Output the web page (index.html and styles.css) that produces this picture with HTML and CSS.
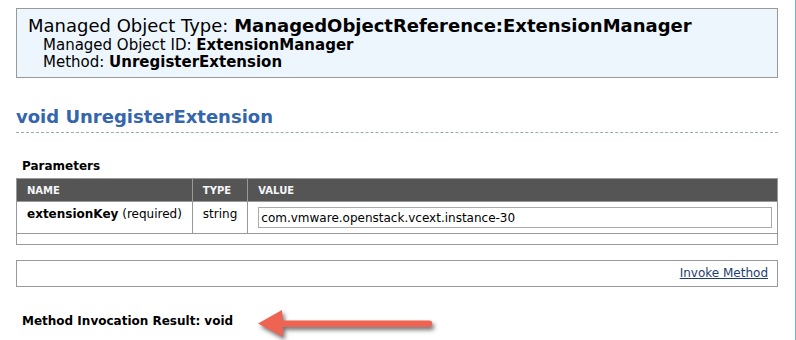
FILE: index.html
```html
<!DOCTYPE html>
<html lang="en">
<head>
    <meta charset="UTF-8">
    <title>UnregisterExtension</title>
    <link rel="stylesheet" href="styles.css">
</head>
<body>
    <div class="page">
        <div class="objbox">
            <div class="objtype">Managed Object Type: <b>ManagedObjectReference:ExtensionManager</b></div>
            <div class="objsub">Managed Object ID: <b>ExtensionManager</b></div>
            <div class="objsub">Method: <b>UnregisterExtension</b></div>
        </div>

        <h2 class="method-title">void UnregisterExtension</h2>

        <h3 class="section">Parameters</h3>
        <table class="params">
            <thead>
                <tr>
                    <th class="col-name">NAME</th>
                    <th class="col-type">TYPE</th>
                    <th>VALUE</th>
                </tr>
            </thead>
            <tbody>
                <tr>
                    <td class="label"><b>extensionKey</b> (required)</td>
                    <td class="label">string</td>
                    <td class="value"><input type="text" value="com.vmware.openstack.vcext.instance-30"></td>
                </tr>
                <tr class="spacer">
                    <td colspan="3"></td>
                </tr>
            </tbody>
        </table>

        <div class="invoke">
            <a href="#">Invoke Method</a>
        </div>

        <div class="result">
            <span class="result-text">Method Invocation Result: void</span>
            <svg class="arrow" width="200" height="46" viewBox="0 0 200 46">
                <path d="M8 21.5 L32 8 L33 18.5 L179 18.5 A3.25 3.25 0 0 1 179 25 L33 25 L33 35 Z" fill="#ef6352"/>
            </svg>
        </div>
    </div>
</body>
</html>
```

FILE: styles.css
```css
body {
    margin: 0;
    font-family: "DejaVu Sans", Verdana, sans-serif;
    font-size: 12px;
    color: #000;
    background: #fff;
}

.page {
    width: 796px;
    min-height: 340px;
    box-sizing: border-box;
    padding: 8px 17px 0 16px;
    border-right: 1px solid #6cb6e0;
}

.objbox {
    padding: 6px 11px 6px;
    border: 1px solid #999;
    background: #eef6fd;
}

.objtype {
    font-size: 18px;
    line-height: 22px;
}

.objsub {
    font-size: 15px;
    line-height: 17px;
    padding-left: 15px;
}

.method-title {
    margin: 28px 0 0;
    padding-bottom: 4px;
    font-size: 18px;
    line-height: 22px;
    color: #3465ad;
    border-bottom: 1px dashed #9aabab;
}

.section {
    margin: 26px 0 0 6px;
    font-size: 12px;
    line-height: 15px;
}

.params {
    width: 100%;
    margin-top: 4px;
    border-collapse: collapse;
    border: 1px solid #999;
}

.params th {
    height: 22px;
    padding: 0 10px;
    background: #555;
    color: #f4f6fa;
    font-size: 10px;
    text-align: left;
    border-left: 1px solid #999;
}

.col-name {
    width: 154px;
}

.col-type {
    width: 33px;
}

.params td {
    padding: 5px 10px;
    border: 1px solid #999;
    vertical-align: top;
    line-height: 15px;
    white-space: nowrap;
}

.params td.value {
    padding: 5px 5px 5px 10px;
}

.value input {
    display: block;
    width: 100%;
    height: 21px;
    box-sizing: border-box;
    margin: 0;
    padding: 1px 2px;
    border: 1px solid #aaa;
    font-family: inherit;
    font-size: 12px;
}

.params .spacer td {
    height: 10px;
    padding: 0;
}

.invoke {
    margin-top: 15px;
    height: 25px;
    padding-right: 9px;
    border: 1px solid #999;
    text-align: right;
    line-height: 25px;
}

.invoke a {
    color: #1c3d6e;
}

.result {
    position: relative;
    margin: 27px 0 0 6px;
    line-height: 15px;
}

.result-text {
    font-weight: bold;
}

.arrow {
    position: absolute;
    left: 228px;
    top: -12px;
    filter: drop-shadow(2px 3px 2px rgba(0, 0, 0, 0.55));
}
```
